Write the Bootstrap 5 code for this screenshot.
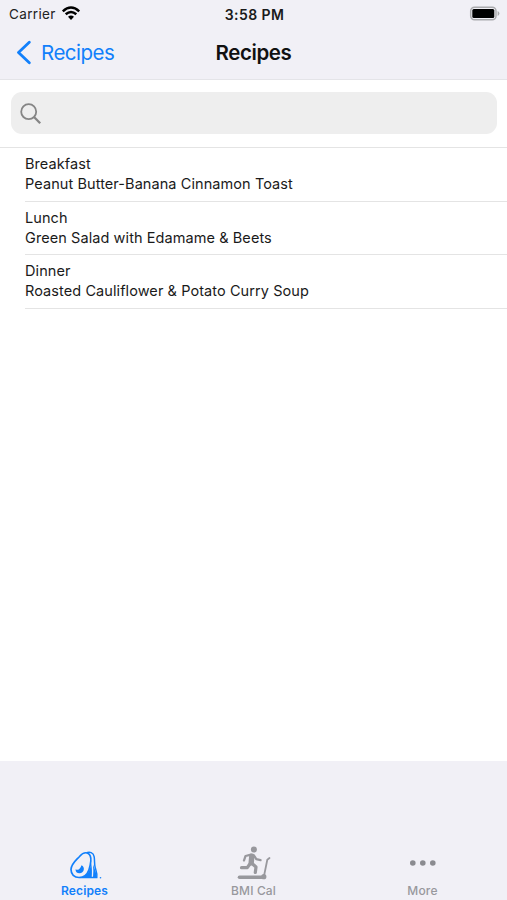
<!DOCTYPE html>
<html lang="en">
<head>
<meta charset="utf-8">
<meta name="viewport" content="width=device-width, initial-scale=1">
<title>Recipes</title>
<link href="https://cdn.jsdelivr.net/npm/bootstrap@5.3.0/dist/css/bootstrap.min.css" rel="stylesheet">
<style>
body{font-family:Inter,"Liberation Sans",sans-serif;color:#1a1a1a;background:#fff;height:900px;overflow:hidden}
svg{display:block;flex:none}
.chrome{background:#f1f0f6}
.top-area{height:80px;border-bottom:1px solid #e4e4e8}
.status{height:27px;padding:0 7px 0 9px}
.status>div{flex:1 1 0}
.carrier{font-size:13.5px;letter-spacing:.35px;color:#222}
.carrier svg{margin-left:5px}
.carrier span,.clock{padding-top:1px}
.clock{font-size:14px;font-weight:600;letter-spacing:.4px}
.titlebar{height:51px;padding:0 16px}
.titlebar>*{flex:1 1 0}
.back{color:#1280fb;font-size:20.5px;letter-spacing:-.5px;gap:10px}
.back span,.page-title{padding-top:1px}
.page-title{font-size:20.5px;font-weight:600;letter-spacing:-.4px;line-height:1.2;color:#111}
.search-area{height:68px;padding:12px 10px 13px 11px;border-bottom:1px solid #e4e4e4}
.search-field{background:#eee;border-radius:11px;padding:2px 0 0 9px}
.meals{padding-left:25px}
.meal{height:53.7px;padding-top:6px;font-size:14.5px;line-height:20px;letter-spacing:.08px;border-bottom:1px solid #e4e4e4}
.tabs{height:139px;padding-bottom:2px}
.tab{flex:1 1 0;color:#98989d;font-size:12px;font-weight:500;line-height:14px;letter-spacing:.15px;text-decoration:none}
.tab svg{margin-bottom:3px}
.tab.active{color:#1280fb;font-weight:600}
</style>
</head>
<body class="d-flex flex-column">
<header class="chrome top-area">
  <div class="status d-flex align-items-center">
    <div class="carrier d-flex align-items-center"><span>Carrier</span>
      <svg width="20" height="15" viewBox="0 0 20 15" fill="none" stroke="#000" stroke-width="2.5"><path d="M1.8 5.3Q10-2.2 18.2 5.3M4.700 8.300q5.300-4.700 10.600 0"/><path d="M7 10.700q3-2.500 6 0L10 14z" fill="#000" stroke="none"/></svg>
    </div>
    <div class="clock text-center">3:58 PM</div>
    <div class="d-flex justify-content-end">
      <svg width="31" height="15" viewBox="0 0 31 15"><rect x="1.700" y="1.200" width="25.300" height="12.600" rx="3.800" fill="#f1f0f6" stroke="#aaaaad" stroke-width="1.500"/><rect x="3.300" y="3" width="22" height="9" rx="1.500"/><path d="M28.600 5q1.800.6 1.800 2.500t-1.800 2.500z" fill="#aaaaad"/></svg>
    </div>
  </div>
  <nav class="titlebar d-flex align-items-center">
    <a class="back d-flex align-items-center text-decoration-none" href="#"><svg width="15" height="25" viewBox="0 0 15 25" fill="none" stroke="currentColor" stroke-width="2.800" stroke-linecap="round" stroke-linejoin="round"><path d="M13.300 2.300 2.500 12.500l10.800 10.200"/></svg><span>Recipes</span></a>
    <h1 class="page-title text-center mb-0">Recipes</h1>
    <span></span>
  </nav>
</header>
<div class="search-area">
  <div class="search-field h-100 d-flex align-items-center">
    <svg width="22" height="22" viewBox="0 0 22 22" fill="none" stroke="#858585"><circle cx="8.700" cy="8.700" r="7.500" stroke-width="1.800"/><path d="m14 14 6.200 6.200" stroke-width="2.300"/></svg>
  </div>
</div>
<main class="meals flex-grow-1">
  <div class="meal"><div>Breakfast</div><div>Peanut Butter-Banana Cinnamon Toast</div></div>
  <div class="meal"><div>Lunch</div><div>Green Salad with Edamame &amp; Beets</div></div>
  <div class="meal"><div>Dinner</div><div>Roasted Cauliflower &amp; Potato Curry Soup</div></div>
</main>
<footer class="chrome tabs d-flex align-items-end">
  <a class="tab active d-flex flex-column align-items-center" href="#">
    <svg width="40" height="38" viewBox="-1.500 -5 40 38">
      <path d="M19.500 5.200c3.500-2.200 7.500-.5 8.200 3.600.6 4 0 7.500 1 11 1 3.500 2.300 6 1.600 9.600H13" fill="none" stroke="currentColor" stroke-width="1.500"/>
      <path d="M24.500 15c.9 3 1.200 9 .7 14.500H15c5.500-2 9-6.500 9.500-14.500zM26.500 16.500l1.500 4c1.300 3.300 2.200 5.700 1.800 9h-3.300q.7-6 0-13z" fill="currentColor"/>
      <path d="M13 8.500c2.500-2.900 5.500-4.500 8.300-3.300 2.800 1.300 3.300 4.300 3 8-.3 3-.8 5.500-1.800 8.500-1.700 4.800-5.500 7.800-10 7.800-4.700 0-8-3.200-8-7.900 0-5.500 4.800-9.100 8.500-13.100z" fill="#f1f0f6" stroke="currentColor" stroke-width="1.700"/>
      <path d="M15 17.300c4 1.700 2.700 8-2 8-2.500 0-4.200-1.600-3.900-4.100 2.700 1.700 4.400 0 5.900-3.900z" fill="currentColor"/>
      <circle cx="34" cy="29.700" r=".8" fill="currentColor"/>
    </svg>
    <span>Recipes</span></a>
  <a class="tab d-flex flex-column align-items-center" href="#">
    <svg width="40" height="38" viewBox="-.5 0 40 38" fill="none" stroke="currentColor" stroke-linecap="round" stroke-linejoin="round">
      <circle cx="19.400" cy="6.600" r="3" fill="currentColor" stroke="none"/>
      <path d="m17.300 13.200-.6 6.500" stroke-width="5.400"/>
      <path d="M16.500 11.700 11 13l-1.500 4.500M19.500 12.500l2.300 3.700 4.200 1" stroke-width="2.300"/>
      <path d="m17.500 20.500 4 3.500-.7 5.500M15 21.500l-2.200 3.200H7" stroke-width="3.200"/>
      <path d="M5 34.300h22" stroke-width="3.600"/>
      <path d="m29.500 33 3.300-16.300 2.200-1.700" stroke-width="1.800"/>
      <circle cx="29.300" cy="33.700" r="2.600" fill="currentColor" stroke="none"/>
    </svg>
    <span>BMI Cal</span></a>
  <a class="tab d-flex flex-column align-items-center" href="#">
    <svg width="40" height="38" viewBox="0 0 40 38" fill="#8b8b90"><circle cx="9.800" cy="20" r="2.800"/><circle cx="19.800" cy="20" r="2.800"/><circle cx="29.800" cy="20" r="2.800"/></svg>
    <span>More</span></a>
</footer>
<script src="https://cdn.jsdelivr.net/npm/bootstrap@5.3.0/dist/js/bootstrap.bundle.min.js"></script>
</body>
</html>
